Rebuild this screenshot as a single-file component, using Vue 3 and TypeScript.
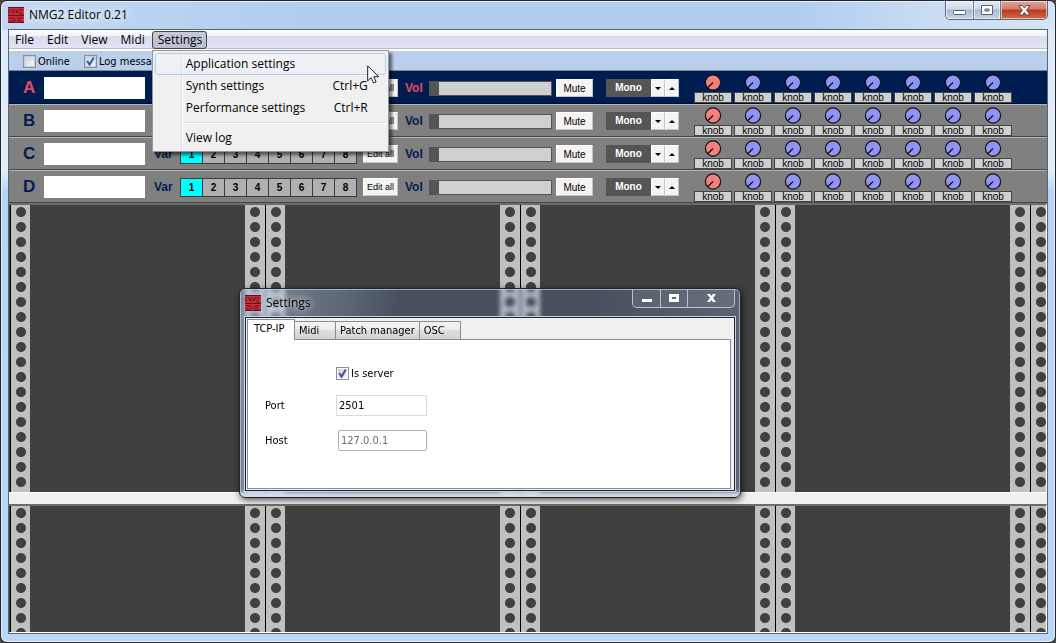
<script setup lang="ts">
import { ref } from 'vue'

interface Slot {
  id: string
  active: boolean
}

const menus = ['File', 'Edit', 'View', 'Midi']
const slots: Slot[] = [
  { id: 'A', active: true },
  { id: 'B', active: false },
  { id: 'C', active: false },
  { id: 'D', active: false },
]
const racks = ['voice', 'fx']
const tabs = ['TCP-IP', 'Midi', 'Patch manager', 'OSC']
const activeTab = ref('TCP-IP')
const online = ref(false)
const logMessages = ref(true)
const isServer = ref(true)
const port = ref('2501')
const host = ref('127.0.0.1')
</script>

<template>
  <div class="window">
    <header class="titlebar">
      <svg class="logo" viewBox="0 0 16 16" aria-hidden="true">
        <rect width="16" height="16" fill="#cf2a35" />
        <path d="M0 8.5H16M1 2v5M3 2l2 4M6 2v5M8 3l1 3 2-4M12 3h3M12 5v2h3M1 11h6M1 14h5M7 12v2M9 11h6M9 13h4M10 15h5M0 .5H16M0 15.500H16" stroke="#5c1626" fill="none" />
      </svg>
      <h1 class="caption">NMG2 Editor 0.21</h1>
      <div class="controls">
        <button type="button" class="ctl" aria-label="Minimize">
          <svg class="low" width="13" height="6" viewBox="0 0 13 6"><rect x=".5" y=".5" width="12" height="4" rx="1" fill="#fff" stroke="#59636f" /></svg>
        </button>
        <button type="button" class="ctl" aria-label="Maximize">
          <svg width="13" height="11" viewBox="0 0 13 11"><path d="M.5 .5h11v9H.5zM4 4h4v2H4z" fill="#fff" fill-rule="evenodd" stroke="#59636f" /></svg>
        </button>
        <button type="button" class="ctl close" aria-label="Close">
          <svg width="13" height="11" viewBox="0 0 13 11"><path d="M.8 .6h3.6l2 2.5 2-2.5H12L8.5 5.2 12 10H8.4l-2-2.6-2 2.6H.8l3.6-4.8z" fill="#fff" stroke="#5a4a52" /></svg>
        </button>
      </div>
    </header>

    <div class="client">
      <nav class="menubar">
        <button v-for="m in menus" :key="m" type="button" class="menu">{{ m }}</button>
        <div class="menu-host">
          <button type="button" class="menu open">Settings</button>
          <div class="popup" role="menu">
            <button type="button" role="menuitem" class="item hot">Application settings</button>
            <button type="button" role="menuitem" class="item"><span>Synth settings</span><span>Ctrl+G</span></button>
            <button type="button" role="menuitem" class="item"><span>Performance settings</span><span>Ctrl+R</span></button>
            <div class="separator"></div>
            <button type="button" role="menuitem" class="item">View log</button>
            <svg class="cursor" width="13" height="20" viewBox="0 0 13 20" aria-hidden="true">
              <path d="M.7 .9v15l3.5-3.3 2.3 5.4 2.6-1.1-2.3-5.2h4.9z" fill="#fff" stroke="#1c1c24" />
            </svg>
          </div>
        </div>
      </nav>

      <div class="toolbar">
        <label class="check">
          <input v-model="online" type="checkbox" />
          <svg viewBox="0 0 13 13"><path d="M3.2 6l2.4 3.6L9.8 2.6" /></svg>
          Online
        </label>
        <label class="check">
          <input v-model="logMessages" type="checkbox" />
          <svg viewBox="0 0 13 13"><path d="M3.2 6l2.4 3.6L9.8 2.6" /></svg>
          Log messages
        </label>
      </div>

      <section v-for="s in slots" :key="s.id" class="slot" :class="{ active: s.active }">
        <b class="letter">{{ s.id }}</b>
        <input class="patch" type="text" :aria-label="'Patch name ' + s.id" />
        <b class="tag var">Var</b>
        <div class="variations">
          <button v-for="n in 8" :key="n" type="button" :class="{ on: n === 1 }">{{ n }}</button>
        </div>
        <button type="button" class="push edit">Edit all</button>
        <b class="tag vol">Vol</b>
        <input class="volume" type="range" min="0" max="127" value="0" :aria-label="'Volume ' + s.id" />
        <button type="button" class="push mute">Mute</button>
        <div class="voices">
          <span class="mode">Mono</span>
          <button type="button" class="push step" aria-label="Fewer voices"><svg width="6" height="3" viewBox="0 0 6 3"><path d="M0 0h6L3 3z" /></svg></button>
          <button type="button" class="push step" aria-label="More voices"><svg width="6" height="3" viewBox="0 0 6 3"><path d="M0 3h6L3 0z" /></svg></button>
        </div>
        <div class="knobs">
          <label v-for="k in 8" :key="k" class="knob" :class="{ first: k === 1 }">
            <input type="range" min="0" max="127" value="0" />
            <svg width="18" height="17" viewBox="0 0 18 17"><circle cx="9" cy="8.5" r="7.6" /><path d="M9 8.5L4 13.5" /></svg>
            <span>knob</span>
          </label>
        </div>
      </section>

      <template v-for="(r, i) in racks" :key="r">
        <div v-if="i > 0" class="splitter"></div>
        <div class="rack" :class="r">
          <div v-for="c in 5" :key="c" class="column">
            <div class="rail"></div>
            <div class="rail right"></div>
          </div>
        </div>
      </template>
    </div>

    <section class="dialog" role="dialog" aria-label="Settings">
      <header class="dialog-title">
        <svg class="logo" viewBox="0 0 16 16" aria-hidden="true">
          <rect width="16" height="16" fill="#cf2a35" />
          <path d="M0 8.5H16M1 2v5M3 2l2 4M6 2v5M8 3l1 3 2-4M12 3h3M12 5v2h3M1 11h6M1 14h5M7 12v2M9 11h6M9 13h4M10 15h5M0 .5H16M0 15.500H16" stroke="#5c1626" fill="none" />
        </svg>
        <h2 class="caption">Settings</h2>
        <div class="controls glass">
          <button type="button" class="ctl" aria-label="Minimize">
            <svg class="low" width="12" height="5" viewBox="0 0 12 5"><rect x="1" y="1" width="10" height="3" fill="#fff" /></svg>
          </button>
          <button type="button" class="ctl" aria-label="Maximize">
            <svg width="10" height="8" viewBox="0 0 10 8"><path d="M0 0h10v8H0zM3 3v2h4V3z" fill="#fff" fill-rule="evenodd" /></svg>
          </button>
          <button type="button" class="ctl close" aria-label="Close">
            <svg width="9" height="8" viewBox="0 0 9 8"><path d="M0 0h3l1.5 2L6 0h3L6 4l3 4H6L4.5 6 3 8H0l3-4z" fill="#fff" /></svg>
          </button>
        </div>
      </header>
      <div class="dialog-client">
        <div class="tabs" role="tablist">
          <button v-for="t in tabs" :key="t" type="button" role="tab" class="tab" :class="{ current: t === activeTab }" @click="activeTab = t">{{ t }}</button>
        </div>
        <form class="page" @submit.prevent>
          <label class="check server">
            <input v-model="isServer" type="checkbox" />
            <svg viewBox="0 0 13 13"><path d="M3.2 6l2.4 3.6L9.8 2.6" /></svg>
            Is server
          </label>
          <label for="port">Port</label>
          <input id="port" v-model="port" class="field" type="text" />
          <label for="host">Host</label>
          <input id="host" v-model="host" class="field host" type="text" disabled />
        </form>
      </div>
    </section>
  </div>
</template>

<style>
body {
  margin: 0;
  background: #4a4648;
}
</style>

<style scoped>
* {
  box-sizing: border-box;
}
button,
input {
  font: inherit;
  color: inherit;
  margin: 0;
  padding: 0;
  border: 0;
  border-radius: 0;
}
.window {
  position: relative;
  display: flex;
  flex-direction: column;
  height: 100vh;
  min-height: 480px;
  padding: 0 7px 8px;
  border: 1px solid #22262e;
  border-radius: 7px;
  box-shadow: inset 0 0 0 1px #e6f1fc;
  background: linear-gradient(90deg, #c3d8f0 0, #b0cdf0 30%, #b0cdf0 75%, #c9dcf2 88%, #d5e4f5 100%) top / 100% 29px no-repeat,
    linear-gradient(#dce8f5 0, #e2eef9 170px, #b6d4f6 190px, #b9d7f8 100%);
  font-family: "DejaVu Sans Condensed", "DejaVu Sans", sans-serif;
  font-size: 11px;
  color: #000;
}
.titlebar {
  display: flex;
  align-items: center;
  flex: none;
  height: 28px;
}
.logo {
  width: 16px;
  height: 16px;
  flex: none;
}
.caption {
  margin: 0 0 0 5px;
  font: 12px/16px "Open Sans", "Noto Sans", sans-serif;
  text-shadow: 0 0 8px #fff, 0 0 10px #fff;
}
.controls {
  display: flex;
  align-self: flex-start;
  height: 19px;
  margin-left: auto;
  border: 1px solid #5b6878;
  border-top: 0;
  border-radius: 0 0 5px 5px;
  overflow: hidden;
}
.ctl {
  display: flex;
  align-items: center;
  justify-content: center;
  width: 27px;
  background: linear-gradient(#e3ebf5 0, #ccd8e8 45%, #a8b9cf 50%, #c6d5e8 100%);
  box-shadow: inset 0 0 0 1px #ffffff90;
}
.ctl + .ctl {
  border-left: 1px solid #6d7a8a;
}
.ctl.close {
  width: 47px;
  background: linear-gradient(#e4a79a 0, #d27a68 45%, #bb3a20 50%, #d4694a 100%);
}
.low {
  margin-top: 5px;
}
.client {
  display: flex;
  flex-direction: column;
  flex: 1;
  min-height: 0;
  border: 1px solid #566575;
  background: #f0f0f0;
}
.menubar {
  position: relative;
  z-index: 2;
  display: flex;
  flex: none;
  height: 21px;
  padding-top: 1px;
  border-bottom: 2px solid #fff;
  background: linear-gradient(#fff 0, #f1f3fa 30%, #d6dcec 35%, #e0e5f4 94%, #b6bccd 95%);
}
.menu {
  height: 18px;
  padding: 0 6px 0 5px;
  border: 1px solid transparent;
  background: none;
  font: 12px/16px "Open Sans", "Noto Sans", sans-serif;
}
.menu-host {
  position: relative;
}
.menu.open {
  padding: 0 4px 0 5px;
  border-color: #43474f;
  border-radius: 3px;
  background: linear-gradient(#c6cad6, #b9bfce);
}
.popup {
  position: absolute;
  top: 19px;
  left: 0;
  width: 237px;
  padding: 2px;
  border: 1px solid #979797;
  background: linear-gradient(90deg, transparent 28px, #dfdfdf 28px, #dfdfdf 29px, #fff 29px, #fff 30px, transparent 30px) #f0f0f0;
  box-shadow: 3px 3px 3px #0008;
}
.item {
  display: flex;
  justify-content: space-between;
  width: 100%;
  height: 22px;
  padding: 0 17px 0 30px;
  border: 1px solid transparent;
  background: none;
  font: 12px/20px "Open Sans", "Noto Sans", sans-serif;
}
.item.hot {
  border-color: #aecff7;
  border-radius: 3px;
  background: linear-gradient(#f3f6fa80, #e6edf680);
}
.separator {
  height: 2px;
  margin: 3px 0 3px 28px;
  background: linear-gradient(#e0e0e0 50%, #fff 50%);
}
.cursor {
  position: absolute;
  top: 14px;
  left: 214px;
}
.toolbar {
  display: flex;
  flex: none;
  gap: 14px;
  height: 20px;
  padding: 1px 14px 0;
  background: #b9cfeb;
  border-bottom: 1px solid #7b8a86;
}
.check {
  position: relative;
  display: flex;
  align-items: center;
  gap: 2px;
}
.check input {
  appearance: none;
  width: 13px;
  height: 13px;
  border: 1px solid #8e8f8f;
  background: linear-gradient(135deg, #cfd3d8, #f6f6f6) content-box #f6f6f6;
  padding: 1px;
}
.check svg {
  position: absolute;
  left: 0;
  width: 13px;
  height: 13px;
  fill: none;
  stroke: #3f5399;
  stroke-width: 2;
  pointer-events: none;
  visibility: hidden;
}
.check input:checked + svg {
  visibility: visible;
}
.slot {
  display: flex;
  align-items: center;
  flex: none;
  height: 33px;
  padding-top: 1px;
  border-top: 1px solid #b4b4b4;
  border-bottom: 1px solid #484848;
  background: #808080;
  font-family: "Liberation Sans", Arial, sans-serif;
  font-size: 10px;
  color: #000;
}
.slot.active {
  border-color: #001d52;
  border-bottom-color: #000c28;
  background: #001d52;
}
.letter {
  width: 35px;
  padding-left: 14px;
  font-size: 17px;
  color: #001d52;
}
.tag {
  font-size: 12px;
  color: #001d52;
}
.active .letter,
.active .tag {
  color: #e04b62;
}
.patch {
  width: 101px;
  height: 22px;
  background: #fff;
}
.var {
  width: 26px;
  margin-left: 9px;
}
.variations {
  display: flex;
  height: 19px;
  border: 1px solid #3c3c3c;
}
.variations button {
  width: 22px;
  background: #b0b0b0;
  font-weight: bold;
}
.variations button:first-child {
  width: 21px;
}
.variations button + button {
  border-left: 1px solid #3c3c3c;
}
.variations .on {
  background: #00ffff;
}
.push {
  display: flex;
  align-items: center;
  justify-content: center;
  height: 18px;
  background: #f4f4f4;
  border: 1px solid;
  border-color: #fff #c4c4c4 #c4c4c4 #fff;
  white-space: nowrap;
}
.edit {
  width: 35px;
  margin-left: 6px;
  font-size: 9px;
}
.vol {
  width: 24px;
  margin-left: 7px;
}
.volume {
  appearance: none;
  width: 123px;
  height: 15px;
  border: 1px solid #555;
  background: #d0d0d0;
}
.volume::-webkit-slider-thumb {
  appearance: none;
  width: 9px;
  height: 13px;
  background: #555;
}
.mute {
  width: 37px;
  margin-left: 4px;
}
.voices {
  display: flex;
  margin-left: 13px;
}
.mode {
  width: 45px;
  height: 18px;
  background: #555;
  color: #fff;
  font-weight: bold;
  line-height: 18px;
  text-align: center;
}
.step {
  width: 14px;
}
.knobs {
  display: flex;
  gap: 2px;
  margin-left: 15px;
}
.knob {
  position: relative;
  display: flex;
  flex-direction: column;
  align-items: center;
  gap: 1px;
  width: 38px;
}
.knob input {
  position: absolute;
  top: 0;
  width: 18px;
  height: 17px;
  opacity: 0;
}
.knob svg {
  fill: #9094f4;
  stroke: #111;
  stroke-width: 1.2;
}
.knob.first svg {
  fill: #f48080;
}
.knob span {
  width: 38px;
  height: 11px;
  border: 1px solid #444;
  background: #d0d0d0;
  line-height: 9px;
  text-align: center;
}
.rack {
  display: flex;
  flex: 288 1 0;
  min-height: 0;
  padding-left: 1px;
  border-top: 2px solid #6c6c6c;
  border-right: 1px solid #fff;
  overflow: hidden;
  background: #404040;
}
.rack.fx {
  flex-grow: 126;
  border-bottom: 1px solid #fff;
}
.column {
  display: flex;
  justify-content: space-between;
  flex: none;
  width: 255px;
  border-left: 1px solid #000;
}
.rail {
  width: 19px;
  background: radial-gradient(circle at 10px 7px, #404040 4.5px, transparent 5.5px) 0 0 / 20px 15px #c0c0c0;
}
.rail.right {
  width: 20px;
}
.splitter {
  flex: none;
  height: 12px;
  border-top: 1px solid #fff;
  background: #f0f0f0;
}
.dialog {
  position: absolute;
  top: 287px;
  left: 238px;
  z-index: 1;
  width: 502px;
  padding: 0 5px 6px;
  border: 1px solid #20262c;
  border-radius: 6px;
  background: linear-gradient(100deg, #c8dcf066 0, #c8dcf022 22%, #6991d700 30%, #6991d700 65%, #c8d4e02c 100%), #6991d733;
  box-shadow: inset 0 0 0 1px #c4d6e4b0, 1px 2px 6px #000a;
  backdrop-filter: blur(2px);
}
.dialog-title {
  display: flex;
  align-items: center;
  height: 28px;
}
.dialog .caption {
  text-shadow: 0 0 6px #fffa, 0 0 12px #fff;
}
.controls.glass {
  border-color: #b8c4cc;
}
.glass .ctl,
.glass .ctl.close {
  background: #ffffff14;
  box-shadow: none;
}
.glass .ctl + .ctl {
  border-color: #b8c4cc;
}
.dialog-client {
  padding: 1px;
  border: 1px solid #20262c;
  box-shadow: 0 0 0 1px #c4d6e4;
  background: #f0f0f0;
}
.tabs {
  display: flex;
  align-items: flex-end;
  height: 20px;
}
.tab {
  height: 18px;
  min-width: 41px;
  padding: 0 4px;
  border: 1px solid #898c95;
  border-left-width: 0;
  border-bottom: 0;
  background: linear-gradient(#f3f3f3 0, #ececec 45%, #dedede 50%, #d2d2d2 100%);
  text-align: left;
}
.tab.current {
  position: relative;
  height: 21px;
  min-width: 48px;
  margin-bottom: -1px;
  padding: 0 6px 3px;
  border-left-width: 1px;
  background: #fff;
}
.page {
  display: grid;
  grid-template-columns: 71px 91px;
  grid-template-rows: 13px 20px 20px;
  row-gap: 15px;
  align-items: center;
  min-height: 150px;
  margin-right: 2px;
  padding: 27px 17px;
  border: 1px solid #898c95;
  background: #fff;
}
.server {
  grid-column: 2;
}
.field {
  width: 91px;
  height: 21px;
  padding: 0 2px;
  border: 1px solid #d8dade;
  background: #fff;
}
.field.host {
  width: 89px;
  margin-left: 2px;
  border-color: #afafaf;
  border-radius: 2px;
  color: #6d6d6d;
}
</style>
